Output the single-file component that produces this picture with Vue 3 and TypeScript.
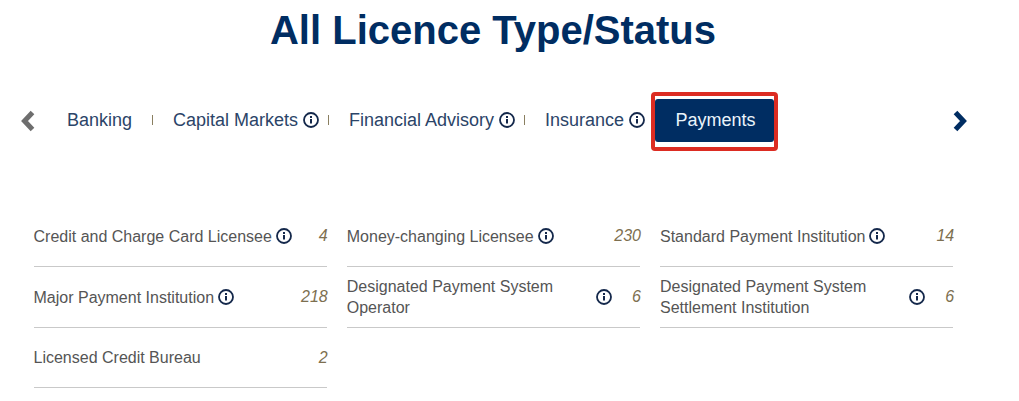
<template>
  <div class="page">
    <h1 class="title">All Licence Type/Status</h1>

    <div class="tabs">
      <svg class="arrow arrow-prev" viewBox="0 0 16 22">
        <path d="M12.500 2.500 4.500 11l8 8.500" />
      </svg>
      <div class="tab-list">
        <template v-for="(t, i) in tabs" :key="t.name">
          <span class="tab" :style="{ width: t.width + 'px' }">
            {{ t.name }}
            <svg v-if="t.info" class="info" viewBox="0 0 16 16">
              <circle cx="8" cy="8" r="7" />
              <rect x="7" y="7" width="2" height="4.500" />
              <rect x="7" y="4" width="2" height="2" />
            </svg>
          </span>
          <i v-if="i < tabs.length - 1" class="sep"></i>
        </template>
        <div class="active-wrap">
          <span class="active-tab">Payments</span>
        </div>
      </div>
      <svg class="arrow arrow-next" viewBox="0 0 16 22">
        <path d="M3.500 2.500 11.500 11l-8 8.500" />
      </svg>
    </div>

    <div class="grid">
      <div v-for="item in items" :key="item.name" class="row">
        <span class="name" :class="{ wide: item.wrap }">
          <span>{{ item.name }}</span>
          <svg v-if="item.info" class="info" viewBox="0 0 16 16">
            <circle cx="8" cy="8" r="7" />
            <rect x="7" y="7" width="2" height="4.500" />
            <rect x="7" y="4" width="2" height="2" />
          </svg>
        </span>
        <em class="count">{{ item.count }}</em>
      </div>
    </div>
  </div>
</template>

<script setup lang="ts">
const tabs = [
  { name: 'Banking', info: false, width: 65 },
  { name: 'Capital Markets', info: true, width: 146 },
  { name: 'Financial Advisory', info: true, width: 166 },
  { name: 'Insurance', info: true, width: 100 }
]

const items = [
  { name: 'Credit and Charge Card Licensee', count: 4, info: true, wrap: false },
  { name: 'Money-changing Licensee', count: 230, info: true, wrap: false },
  { name: 'Standard Payment Institution', count: 14, info: true, wrap: false },
  { name: 'Major Payment Institution', count: 218, info: true, wrap: false },
  { name: 'Designated Payment System Operator', count: 6, info: true, wrap: true },
  { name: 'Designated Payment System Settlement Institution', count: 6, info: true, wrap: true },
  { name: 'Licensed Credit Bureau', count: 2, info: false, wrap: false }
]
</script>

<style>
body {
  background: #fff;
  overflow: hidden;
}
</style>

<style scoped>
.page {
  width: 1019px;
  height: 401px;
  overflow: hidden;
  font-family: "Liberation Sans", Arial, sans-serif;
}

.title {
  margin: 0;
  padding-top: 7px;
  text-align: center;
  width: 986px;
  font-size: 40px;
  line-height: 46px;
  font-weight: 700;
  color: #002d62;
}

.tabs {
  display: flex;
  align-items: center;
  margin-top: 37px;
  height: 60px;
  padding-left: 20px;
}

.arrow {
  width: 16px;
  height: 22px;
  margin-top: 2px;
  fill: none;
  stroke-width: 5;
  flex-shrink: 0;
}

.arrow-prev {
  stroke: #6e6e6e;
}

.arrow-next {
  stroke: #002d62;
  margin-left: 174px;
}

.tab-list {
  display: flex;
  align-items: center;
  margin-left: 31px;
}

.tab {
  display: flex;
  align-items: center;
  gap: 5px;
  font-size: 18px;
  color: #2b4468;
  white-space: nowrap;
}

.sep {
  width: 1px;
  height: 10px;
  background: #8a7f60;
  margin: 0 20px;
  flex-shrink: 0;
}

.tab:nth-of-type(2) + .sep,
.tab:nth-of-type(3) + .sep {
  margin: 0 20px 0 9px;
}

.active-wrap {
  box-sizing: border-box;
  border: 4px solid #dc2c22;
  border-radius: 4px;
  padding: 3px 0 5px;
  margin-top: 3px;
  margin-left: 6px;
  width: 127px;
  height: 59px;
}

.active-tab {
  display: block;
  box-sizing: border-box;
  width: 119px;
  height: 43px;
  padding-left: 2px;
  border-radius: 3px;
  background: #002d62;
  color: #eaf4fb;
  font-size: 18px;
  line-height: 42px;
  text-align: center;
}

.info {
  width: 16px;
  height: 16px;
  flex-shrink: 0;
  fill: none;
}

.info circle {
  stroke: #14284b;
  stroke-width: 1.800;
}

.info rect {
  fill: #14284b;
}

.grid {
  display: grid;
  grid-template-columns: repeat(3, 293.25px);
  column-gap: 20px;
  margin-top: 56px;
  padding-left: 33.5px;
}

.row {
  box-sizing: border-box;
  display: flex;
  align-items: center;
  justify-content: space-between;
  height: 61px;
  border-bottom: 1px solid #c9c9c9;
}

.row:nth-child(n + 7) {
  height: 60px;
}

.name {
  display: flex;
  align-items: center;
  gap: 4px;
  font-size: 16px;
  line-height: 21px;
  color: #555;
}

.name.wide {
  justify-content: space-between;
  flex: 1;
  padding-right: 20px;
}

.name.wide span {
  max-width: 225px;
}

.count {
  margin-right: -1px;
  font-size: 16px;
  font-style: italic;
  color: #7d6f50;
}
</style>
